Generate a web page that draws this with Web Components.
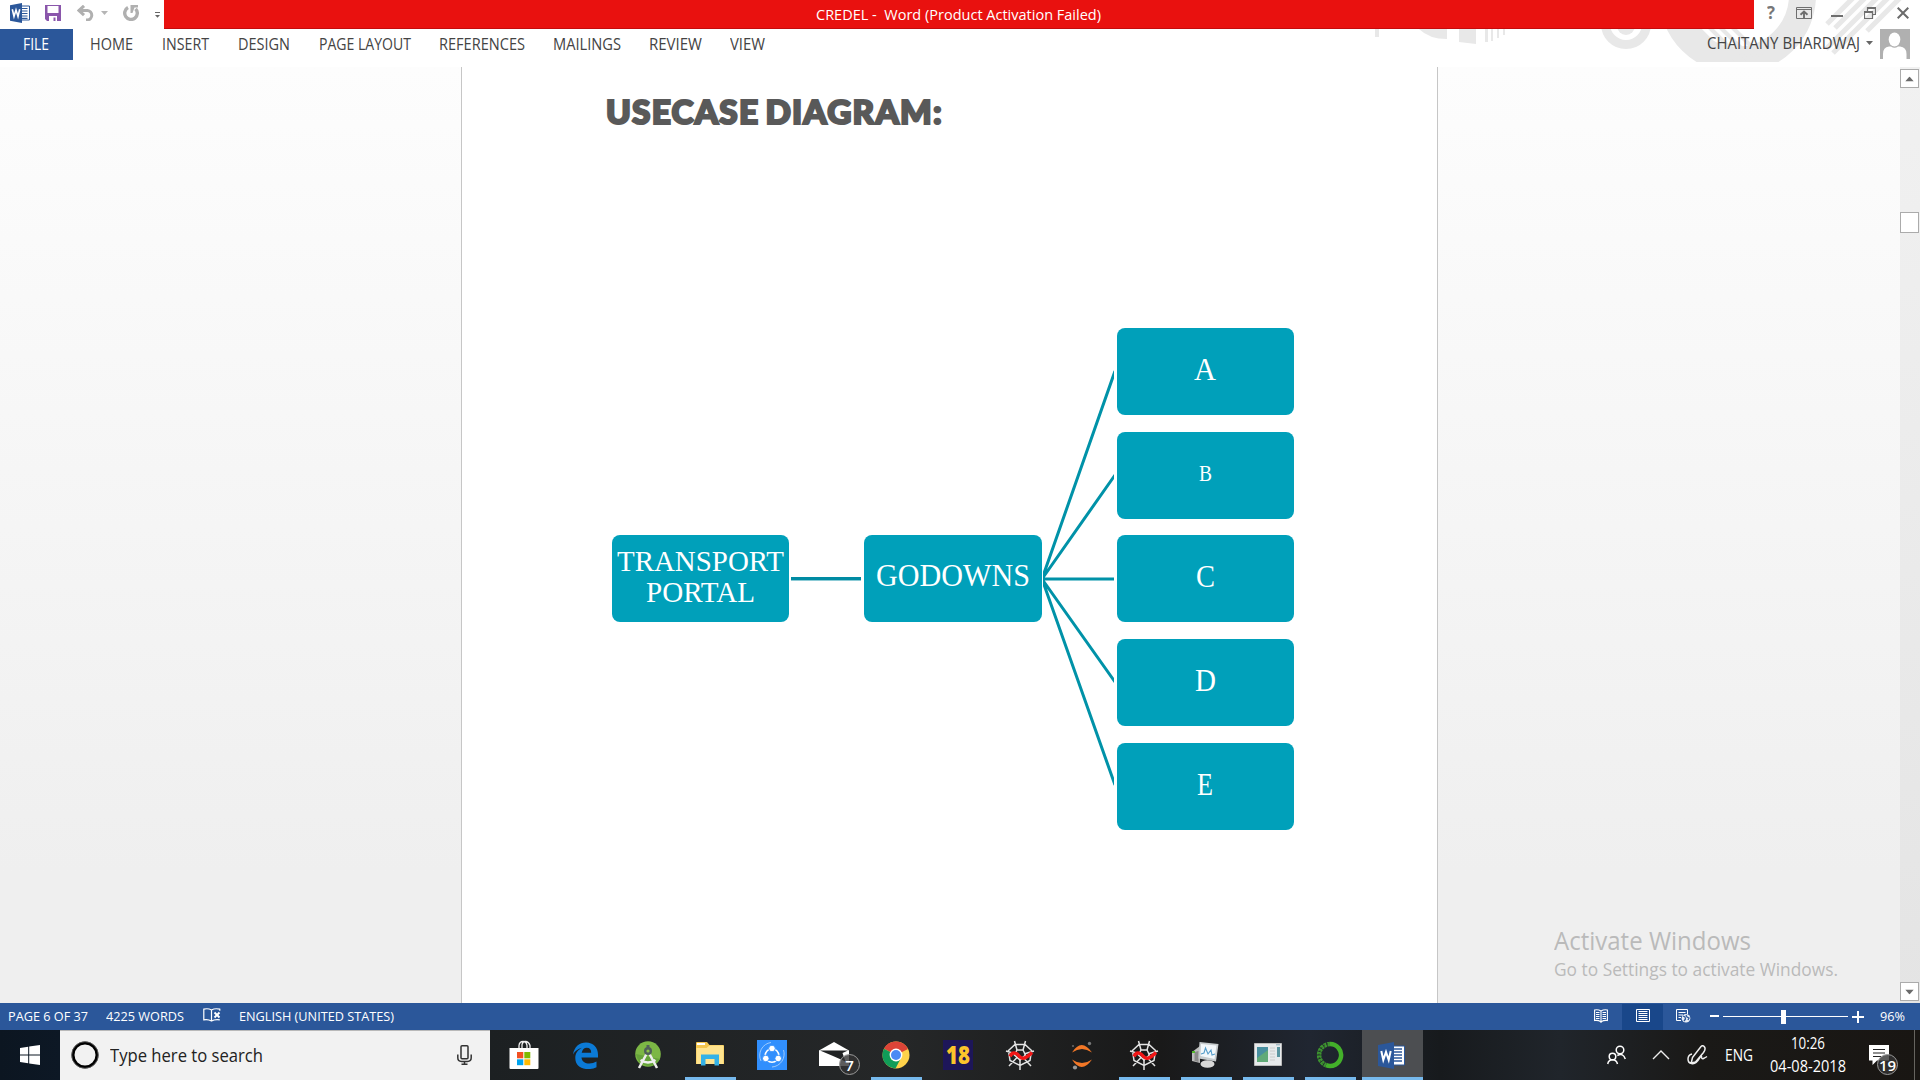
<!DOCTYPE html>
<html lang="en">
<head>
<meta charset="utf-8">
<title>CREDEL - Word</title>
<style>
html,body{margin:0;height:100%;overflow:hidden}
body{font-family:"Open Sans","Noto Sans",sans-serif;background:#fff}
</style>
</head>
<body>
<word-desktop></word-desktop>
<script>
const ICONS = {
word:[20,20,`<path d="M9 3h10.500v14H9z" fill="#fff" stroke="#2b579a"/><path d="M12 5.500h5.500M12 8h5.500M12 10.500h5.500M12 13h5.500M12 15.300h5.500" stroke="#2b579a" stroke-width="1.200"/><path d="M0 2.300 12 0v20L0 17.700z" fill="#2b579a"/><path d="M2.300 6.300 4 13.500 6 7l2 6.500 1.700-7.200" fill="none" stroke="#fff" stroke-width="1.600"/>`],
save:[16,16,`<path d="M0 0h16v16H2L0 14z" fill="#8a56ab"/><path d="M2.500 1h11v7h-11zM4 11h8v5h-1.500v-3.500h-2V16H4z" fill="#fff"/>`],
undo:[18,16,`<path d="M1 5.500h9.500a5 4.800 0 0 1 0 9.500H9M7 .8 2 5.500l5 4.700" fill="none" stroke="#b0b0b0" stroke-width="3"/>`],
tri:[7,4,`<path d="M0 0h7L3.500 4z" fill="currentColor"/>`],
redo:[16,16,`<path d="M5 2.600A6.300 6.300 0 1 0 12.600 3.800" fill="none" stroke="#b0b0b0" stroke-width="3.400"/><path d="M7.500 0H15v2.500h-3.500L9.500 8h-2z" fill="#b0b0b0"/>`],
qat:[5,6,`<path d="M0 .5h5" stroke="#666"/><path d="M0 3h5L2.500 5.800z" fill="#666"/>`],
ribbon:[16,12,`<path d="M.5.500h15v11H.5zM.5 2.500h15" fill="none" stroke="#6e6e6e"/><path d="M8 11V5.500M4.500 7.800 8 4.500l3.500 3.300" fill="none" stroke="#6e6e6e" stroke-width="1.900"/>`],
min:[12,12,`<path d="M0 9h12" stroke="#6e6e6e" stroke-width="2"/>`],
restore:[12,12,`<path d="M3.500 4.500V.500h8v7h-3M3.500 1.500h8" fill="none" stroke="#6e6e6e" stroke-width="1.200"/><path d="M.5 4.500h8v7h-8zM.5 5.500h8" fill="none" stroke="#6e6e6e" stroke-width="1.200"/>`],
close:[12,12,`<path d="m.7.700 10.600 10.600M11.300.700.700 11.300" stroke="#6b6b6b" stroke-width="2"/>`],
avatar:[30,30,`<path d="M0 0h30v30H0z" fill="#b0b0b0"/><ellipse cx="14.500" cy="10.500" rx="5.800" ry="7" fill="#fff"/><path d="M3 30v-5q0-7 6-7.500h2q3.500 2.500 7 0h2q6.500.500 6.500 7.500v5z" fill="#fff"/>`],
proof:[18,15,`<path d="M8.500 12.500V2Q5 0 .8 1.200v10.600Q5 11 8.500 13 12 11 16.800 11.800M8.500 2Q12 0 16.800 1.200v1.500" fill="none" stroke="#fff" stroke-width="1.200"/><path d="m11.500 4.500 5 5m0-5-5 5" stroke="#fff" stroke-width="1.900"/>`],
book:[14,14,`<path d="M7 2Q4 .2.600 1v10.500Q4 11 7 12.800 10 11 13.400 11.500V1Q10 .2 7 2v12" fill="none" stroke="#fff" stroke-width="1.100"/><path d="M2 3.500h3.500M2 5.500h3.500M2 7.500h3.500M2 9.500h3.500m3-6H12m-3.500 2H12m-3.500 2H12m-3.500 2H12" stroke="#fff"/>`],
print:[14,14,`<path d="M.5.500h13v12H.5z" fill="none" stroke="#fff"/><path d="M2.500 2.500h9m-9 2h9m-9 2h9m-9 2h9m-9 2h9" stroke="#fff"/>`],
web:[15,14,`<path d="M5 11.500H.5V.5h11V5M2.500 3.500h7m-7 2.500H7m-4.500 2.500H5" fill="none" stroke="#fff"/><circle cx="10" cy="9.300" r="4.300" fill="#e9eef6"/><path d="m7 7 2 1 .500 2L8 12M10 6l1 2 2 1-1 2" stroke="#2b579a" fill="none" stroke-width="1.300"/>`],
win:[20,20,`<path d="M0 2.900 8.200 1.700v7.800H0zM9.200 1.600 20 0v9.500H9.200zM0 10.500h8.200v7.800L0 17.100zM9.200 10.500H20V20L9.200 18.400z" fill="#fff"/>`],
cortana:[28,28,`<circle cx="14" cy="14" r="12" fill="none" stroke="#000" stroke-width="3"/><circle cx="14" cy="14" r="13.300" fill="none" stroke="#666" stroke-width=".8"/>`],
mic:[15,20,`<rect x="4" y=".8" width="7" height="13" rx="1" fill="none" stroke="#333" stroke-width="1.500"/><path d="M.8 9.500v3.300q0 3.600 3.700 3.600h6q3.700 0 3.700-3.600V9.500M7.500 16.400v3M4.500 19.300h6" fill="none" stroke="#333" stroke-width="1.500"/>`],
store:[30,30,`<path d="M10 10V5.500q.5-4 4-4t4 4V10M13 9V4.500q1-3.500 4-3t4 4V9" fill="none" stroke="#eee" stroke-width="1.300"/><path d="M.500 8h29v20q0 1-1 1h-27q-1 0-1-1z" fill="#fff"/><path d="M8 12h6.300v6.300H8z" fill="#f25022"/><path d="M15.300 12h6v6.300h-6z" fill="#7fba00"/><path d="M8 19.300h6.300v5.900H8z" fill="#00a4ef"/><path d="M15.300 19.300h6v5.900h-6z" fill="#ffb900"/>`],
edge:[26,27,`<path d="M1 12.500C2.200 4.800 7.500.500 14 .500c7.500 0 12 5 12 12v3H9.500c.4 4 3.600 6 7.800 6 2.700 0 5-.7 7.200-2v5.700c-2.500 1.300-5.400 1.900-8.600 1.900C8 27.100 3.300 22.700 3.300 16c0-4.600 2.400-7.900 6.600-10.200C6 6.700 3 9 1 12.500zm8.700-1.700h9.500c0-3.200-1.600-5-4.400-5-2.700 0-4.500 1.900-5.100 5z" fill="#0b7ad6"/>`],
android:[28,30,`<circle cx="14" cy="14" r="12.800" fill="#7cb745"/><path d="M2 14a12.800 12.800 0 0 0 24 5" fill="#65a33a"/><path d="M12.500 14 5 28M15.500 14l7.500 14M6.500 20q7.500 5 15 0" fill="none" stroke="#eee" stroke-width="2.500"/><circle cx="14" cy="11" r="4" fill="#50605a"/><circle cx="14" cy="11" r="1.600" fill="#8bc34a"/><path d="M14 5v3" stroke="#50605a" stroke-width="3"/>`],
folder:[28,26,`<path d="M0 1q0-1 1-1h10l2.500 3H27q1 0 1 1v18H0z" fill="#f4c64e"/><path d="M1 2h8" stroke="#fff" stroke-width="2"/><path d="M.500 6h10l3-2.500H27.500V22H.500z" fill="#ffe48f"/><path d="M5 23.500V12.500h18v11h-4.500V17h-9v6.500z" fill="#35b2e7"/>`],
share:[30,30,`<path d="M0 0h30v30H0z" fill="#318ffd"/><path d="M4 21A13 13 0 0 1 14 2.500M26.500 10A13 13 0 0 1 15 27" fill="none" stroke="#9ccafe"/><circle cx="15" cy="15.500" r="6.800" fill="none" stroke="#fff" stroke-width="1.600"/><g fill="#fff" stroke="#318ffd" stroke-width=".9"><circle cx="15" cy="8.500" r="3.300"/><circle cx="8.800" cy="18.500" r="3.300"/><circle cx="21.200" cy="18.500" r="3.300"/></g>`],
mail:[30,24,`<path d="M0 8.500 15 0l15 8.500V24H0z" fill="#fff"/><path d="M1 8.500h28L23.500 11l3 8.500L14 14z" fill="#202223"/>`],
chrome:[28,28,`<circle cx="14" cy="14" r="13.500" fill="#ffd24a"/><path d="M14 14 2 7.700a13.500 13.500 0 0 1 24 .3z" fill="#dc4437"/><path d="M2 7.700A13.500 13.500 0 0 0 13.500 27.500L19 17l-5-3z" fill="#109d58"/><circle cx="14" cy="14" r="6.400" fill="#fff"/><circle cx="14" cy="14" r="5" fill="#4a8af4"/>`],
spyder:[30,30,`<g stroke="#e4e4e4" fill="none" stroke-width="1.500"><path d="M10 4.500h10l6.500 6-1.500 10L15 25.500l-10-5-1.500-10zM9.500 1 12 10M20.500 1 18 10M1 11l10 3M29 11l-10 3M15 18v12M12.500 17 4 26M17.500 17l8.500 9"/><path d="m12 10 6 0 2.500 5-5.500 5-5.500-5z"/></g><path d="M5 16.500c3-6 7-3 9.500 0s6 2.500 12.500-4" fill="none" stroke="#f21616" stroke-width="3.500"/>`],
jupyter:[22,29,`<path d="M1 11.500Q10.500-3.500 21 11.500 11 4.500 1 11.500zM1 18.500q9.500 15 20 0-10 7-20 0z" fill="#f37726"/><circle cx="18.500" cy="2.500" r="1.700" fill="#777"/><circle cx="4" cy="26.500" r="2.100" fill="#999"/><circle cx="2" cy="5" r="1.100" fill="#666"/>`],
monitor:[28,28,`<path d="m1 11 8-6v17l-8-2z" fill="#bdbdbd"/><path d="m3.500 11 4-1v11l-4-1z" fill="#8a8a8a"/><path d="M1 10h3v2H1z" fill="#52b82c"/><ellipse cx="16.500" cy="23" rx="7" ry="3.800" fill="#d8d8d8"/><path d="m8.500 1 19 2-2.500 17.500-17.500-3z" fill="#c6cbcd"/><path d="m10 3 15.500 1.500-2 13.500L9.500 15z" fill="#f2f7fa"/><path d="m10 13 3-1 1.500-5L17 13l3-4 1 5 3-1" fill="none" stroke="#559dca" stroke-width="1.100"/>`],
app:[28,24,`<path d="M.5.500h27v22H.5z" fill="#e7eaec" stroke="#bbb"/><path d="M3 4h11v15H3z" fill="#498fa0"/><path d="m3 15 11-8v12H3z" fill="#61aa78"/><path d="M16 5h5M16 8h5m-5 3h5m-5 3h5m-5 3h5" stroke="#ccc"/><path d="M23 4h3v10h-3z" fill="#5994a0"/><path d="M22 1.800h4" stroke="#8ca9b8"/>`],
anaconda:[28,28,`<path d="M14 3a11 11 0 1 1-4 21.200" fill="none" stroke="#43b02a" stroke-width="4.500"/><path d="M14 3A11 11 0 0 0 10 24.200" fill="none" stroke="#3d9430" stroke-width="4.500" stroke-dasharray="2.800 .7"/><path d="M12 2.800A11.500 11.500 0 0 0 8 23.500" fill="none" stroke="#222b24" stroke-width=".9" stroke-dasharray="1.500 2"/>`],
wordbig:[28,27,`<path d="M14 4h12.500v19H14z" fill="#fff" stroke="#2b579a"/><path d="M16 7h8m-8 3h8m-8 3h8m-8 3h8m-8 3h8" stroke="#2b579a" stroke-width="1.400"/><path d="M0 3 16 0v27L0 24z" fill="#2b579a"/><path d="m3.300 9 2 9L8 10l2.700 8 2-9" fill="none" stroke="#fff" stroke-width="2"/>`],
people:[19,20,`<g fill="none" stroke="#fff" stroke-width="1.500"><circle cx="13" cy="5" r="3.800"/><circle cx="5.500" cy="11.500" r="3.300"/><path d="M.7 19q.8-4.200 4.800-4.200t5 4.200M10.300 10.500q6-3 8 3.500"/></g>`],
chev:[18,10,`<path d="m1 9 8-8 8 8" fill="none" stroke="#eee" stroke-width="1.400"/>`],
pen:[21,20,`<path d="M5.500 12.500 14 1.500q2-1.800 3.500.5t-1 5.500L8.500 17l-4.300 1zM5 9Q1 10 1 14t3.500 4.500Q9 19.500 12 14q2-4 2.500-2.500 0 3 2 2t3.500-2" fill="none" stroke="#eee" stroke-width="1.500"/>`],
note:[20,20,`<path d="M0 0h20v15.500H8L3.500 20v-4.500H0z" fill="#fff"/><path d="M4 4.500h12M4 8h12M4 11.500h8" stroke="#222" stroke-width="1.200"/>`]
};
const define = (name, html, init) => customElements.define(name, class extends HTMLElement {
  constructor(){ super(); this.attachShadow({mode:'open'}); }
  connectedCallback(){
    if(this.done) return; this.done = true;
    this.shadowRoot.innerHTML = typeof html === 'function' ? html(this) : html;
    if(init) init(this);
  }
});
const ic = (n, style='') => `<ui-icon name="${n}" style="${style}"></ui-icon>`;
const tx = (t, w, size, style='') => `<fit-text w="${w}" size="${size}" style="${style}">${t}</fit-text>`;

define('word-desktop', `<style>:host{display:flex;flex-direction:column;width:1920px;height:1080px}</style>
<word-header></word-header><word-workspace></word-workspace><word-status></word-status><task-bar></task-bar>`);

define('word-header', `<style>
:host{display:flex;flex-direction:column;height:67px;background:#fff;position:relative;color:#444}
.art{position:absolute;left:1360px;top:0}
.row{display:flex;position:relative}
.title{height:29px}.quick{width:164px;display:flex;align-items:center;height:26px;color:#b5b5b5}
.red{width:1590px;height:29px;box-sizing:border-box;background:#e9110f;border-bottom:1px solid #c40b0d;display:flex;color:#fff;padding-left:652px}
.win{display:flex;height:26px;align-items:center}
.tabs{height:31px}
.file{width:73px;height:31px;background:#2b579a;color:#fff;display:flex;padding-left:23px;box-sizing:border-box}
</style>
<svg class="art" width="560" height="62" viewBox="1360 0 560 62"><g fill="#e8e8e8">
<path d="M1375 29h4v8h-4zM1419 29h28v10q-18 0-28-10zM1459 29h17v15l-17-2zM1485 29h3v13h-3zM1491 29h2v12h-2zM1497 29h2v9h-2zM1503 29h2v6h-2z"/><circle cx="1626" cy="26" r="9"/></g>
<circle cx="1626" cy="24" r="20.500" fill="none" stroke="#e8e8e8" stroke-width="9"/>
<circle cx="1737.500" cy="-5" r="65" fill="none" stroke="#e8e8e8" stroke-width="27"/>
<path d="m1690 20 44 44M1702 20l42 42M1713 20l38 38M1725 20l36 36" stroke="#e8e8e8" stroke-width="4"/>
<path d="m1827 24 29-29M1835 28l33-33M1826 49l54-54M1833 53l58-58M1867 31l36-36" stroke="#e8e8e8" stroke-width="5"/></svg>
<div class="row title"><div class="quick">${ic('word','margin-left:10px')}${ic('save','margin-left:15px')}${ic('undo','margin-left:16px')}${ic('tri','margin-left:6px')}${ic('redo','margin-left:15px')}${ic('qat','margin:4px 0 0 16px')}</div>
<div class="red">${tx('CREDEL -&nbsp; Word (Product Activation Failed)',285,15.2,'height:29px')}</div>
<div class="win">${tx('?',8,17,'font-weight:700;color:#777;margin-left:13px;height:28px')}${ic('ribbon','margin-left:21px')}${ic('min','margin-left:19px')}${ic('restore','margin-left:21px')}${ic('close','margin-left:21px')}</div></div>
<div class="row tabs"><div class="file">${tx('FILE',26,15.4,'height:33px')}</div>
${[['HOME',17,43],['INSERT',29,47],['DESIGN',29,52],['PAGE LAYOUT',29,92],['REFERENCES',28,86],['MAILINGS',28,68],['REVIEW',28,53],['VIEW',28,35]].map(a=>tx(a[0],a[2],15.4,`height:33px;margin-left:${a[1]}px`)).join('')}
${tx('CHAITANY BHARDWAJ',153,15.4,'margin-left:942px;height:31px')}${ic('tri','color:#666;margin:12px 0 0 6px')}${ic('avatar','margin-left:7px')}</div>`);

define('word-workspace', `<style>
:host{display:flex;height:936px;background:linear-gradient(#fdfdfd,#efefef 86%,#efefef)}
.left{width:461px}.right{flex:1;display:flex;justify-content:flex-end;position:relative}
.mark{position:absolute;left:116px;top:861px;color:#bababa;display:flex;flex-direction:column}
</style><div class="left"></div><word-page></word-page><div class="right"><scroll-bar></scroll-bar>
<div class="mark">${tx('Activate Windows',197,25,'height:25px')}${tx('Go to Settings to activate Windows.',284,17.6,'height:30px;margin-top:2px')}</div></div>`);

define('word-page', `<style>
:host{display:block;width:977px;height:936px;box-sizing:border-box;background:#fff;border:solid #c6c6c6;border-width:0 1px;position:relative}
h1{margin:0;padding:24px 0 0 144px;font:900 32px Lato,sans-serif;letter-spacing:1.200px;word-spacing:-3px;color:#595959;-webkit-text-stroke:2.200px #595959}
svg{position:absolute;left:581px;top:261px;overflow:hidden}
.a{position:absolute;left:329px;top:510px;width:70px;height:3px;background:#008ba3;border-bottom:1px solid #8ccbd6}
</style><h1>${tx('USECASE DIAGRAM:',337,32.500,'height:42px')}</h1>
<div class="a"></div>
<svg width="71" height="500" viewBox="1043 328 71 500"><path d="m1042 579 73-208M1042 579l73-104M1042 579h73M1042 579l73 103M1042 579l73 206" stroke="#0092a8" stroke-width="3" fill="none"/></svg>
${[[612,535,177,'TRANSPORT',167,30],[864,535,177,'GODOWNS',154,30.6],[1117,328,176,'A',22,31],[1117,432,176,'B',13,23],[1117,535,176,'C',19,31],[1117,639,176,'D',21,31],[1117,743,176,'E',16,31]].map(n=>`<diagram-node style="left:${n[0]-462}px;top:${n[1]-67}px;width:${n[0]>1100||n[0]==612?177:178}px">${tx(n[3],n[4],n[5],'height:31px;margin-right:'+(n[0]>612?1:0)+'px')}${n[3]=='TRANSPORT'?tx('PORTAL',109,30,'height:31px'):''}</diagram-node>`).join('')}`);

define('diagram-node', `<style>:host{position:absolute;height:87px;box-sizing:border-box;padding-bottom:2px;background:#00a0ba;border-radius:8px;display:flex;flex-direction:column;align-items:center;justify-content:center;color:#fff;font-family:"Liberation Serif",serif}</style><slot></slot>`);

define('scroll-bar', `<style>
:host{display:flex;flex-direction:column;width:20px;height:936px;background:linear-gradient(#f1f1f1,#e4e4e4)}
div{box-sizing:border-box;width:19px;border:1px solid #ababab;background:#fff;display:flex;align-items:center;justify-content:center;color:#6a6a6a}
.u{height:19px;margin-top:2px}.t{height:21px;margin-top:124px}.d{height:19px;margin-top:749px}
</style><div class="u">${ic('tri','transform:scale(1.25) rotate(180deg)')}</div><div class="t"></div><div class="d">${ic('tri','transform:scale(1.25)')}</div>`);

define('word-status', `<style>
:host{display:flex;height:27px;background:#2b579a;color:#fff;align-items:center;box-sizing:border-box}
.on{margin-left:14px;width:41px;height:26px;margin-top:1px;background:#19478a;display:flex;align-items:center;justify-content:center}
.m{width:9px;height:2px;background:#fff;margin-left:19px;margin-top:-1px}
.z{width:125px;height:15px;margin-left:4px;display:flex;align-items:center;justify-content:center;background:linear-gradient(#fff,#fff) 0 7px/100% 1px no-repeat}
.z i{width:5px;height:14px;background:#fff;margin-left:-4px}
.p{width:12px;height:12px;margin-left:4px;background:linear-gradient(#fff,#fff) 50% 50%/12px 2px no-repeat,linear-gradient(#fff,#fff) 50% 50%/2px 12px no-repeat}
</style>${tx('PAGE 6 OF 37',80,12.8,'margin-left:8px')}${tx('4225 WORDS',78,12.8,'margin-left:18px')}${ic('proof','margin:-3px 0 0 19px')}${tx('ENGLISH (UNITED STATES)',155,12.8,'margin-left:18px')}
${ic('book','margin:-1px 0 0 1200px')}<div class="on">${ic('print','margin-top:-2px')}</div>${ic('web','margin:-1px 0 0 13px')}<div class="m"></div><div class="z"><i></i></div><div class="p"></div>${tx('96%',25,12.8,'margin-left:16px')}`);

const apps=['store','edge','android','folder','share','mail','chrome','eighteen','spyder','jupyter','spyder','monitor','app','anaconda','wordbig'];
define('task-bar', `<style>
:host{display:flex;height:50px;background:linear-gradient(90deg,#0c1621 0,#0d1825 60px,#1c2022 490px,#252728 900px,#191919 1160px,#202631 1310px,#171a1d 1440px,#20252b 1560px,#1a1917 1700px,#191613);color:#fff;align-items:center}
.start{width:60px;display:flex;justify-content:center}
.search{width:430px;height:50px;box-sizing:border-box;border-top:1px solid #b9b9b9;background:#f2f2f2;color:#222;display:flex;align-items:center}
.apps{display:flex;margin-left:3px}
.tray{display:flex;margin-left:184px;align-items:center}
.clock{display:flex;flex-direction:column;align-items:center;margin-left:16px;width:78px}
.nt{margin-left:22px;display:flex;position:relative}
.end{width:1px;height:50px;background:#66645f;margin-left:25px}
</style><div class="start">${ic('win')}</div><div class="search">${ic('cortana','margin:-1px 0 0 11px')}${tx('Type here to search',153,18,'margin-left:11px;height:47px')}${ic('mic','margin:0 0 1px 194px')}</div>
<div class="apps">${apps.map((a,i)=>`<task-app icon="${a}" ${[3,6,10,11,12,13].includes(i)?'open':''} ${i==14?'active':''}></task-app>`).join('')}</div>
<div class="tray">${ic('people')}${ic('chev','margin-left:26px')}${ic('pen','margin-left:17px')}${tx('ENG',28,15.600,'margin:2px 0 0 17px')}<div class="clock">${tx('10:26',34,15.600,'height:23px;margin-top:1px')}${tx('04-08-2018',76,15.600,'height:23px')}</div><div class="nt">${ic('note')}<count-badge>19</count-badge></div><div class="end"></div></div>`);

define('task-app', e=>{const n=e.getAttribute('icon');return `<style>
:host{display:flex;width:62px;height:50px;align-items:center;justify-content:center;position:relative;box-sizing:border-box}
:host([active]){background:linear-gradient(#4c4e51,#4c4e51) 1px 0/61px 50px no-repeat}
.line{position:absolute;bottom:0;left:6px;width:51px;height:3px;background:#76b9ed}
:host([active]) .line{left:1px;width:61px}
.n{width:30px;height:30px;background:#1d1659;color:#fbc52b;display:flex;justify-content:center;font-weight:800}
</style>${n=='eighteen'?`<div class="n">${tx('18',24,25.5,'height:29px')}</div>`:ic(n,(n=='mail'?'margin-bottom:2px':'')+(n=='monitor'||n=='edge'?'margin-right:2px':''))}
${n=='mail'?'<count-badge class="b" style="left:36px;top:24px">7</count-badge>':''}${e.hasAttribute('open')||e.hasAttribute('active')?'<div class="line"></div>':''}`});

define('count-badge', `<style>:host{position:absolute;left:8px;top:9px;width:21px;height:21px;box-sizing:border-box;border:1px solid #999;border-radius:50%;background:#333c;display:flex;align-items:center;justify-content:center;font:600 15px/18px "Open Sans",sans-serif;color:#fff}</style><slot></slot>`);

define('ui-icon', e=>{const [w,h,s]=ICONS[e.getAttribute('name')];return `<style>:host{display:block;flex:none;width:${w}px;height:${h}px}svg{display:block}</style><svg width="${w}" height="${h}" viewBox="0 0 ${w} ${h}">${s}</svg>`});

/* A line of text condensed or widened to an exact width. */
define('fit-text', e=>`<style>:host{display:flex;flex:none;align-items:center;width:${e.getAttribute('w')}px;font-size:${e.getAttribute('size')}px;line-height:1;white-space:nowrap}span{flex:none;transform-origin:0 50%;line-height:normal;margin-top:-2px}</style><span><slot></slot></span>`,
 e=>{const s=e.shadowRoot.querySelector('span');s.style.transform=`scaleX(${+e.getAttribute('w')/s.getBoundingClientRect().width})`;});
</script>
</body>
</html>
